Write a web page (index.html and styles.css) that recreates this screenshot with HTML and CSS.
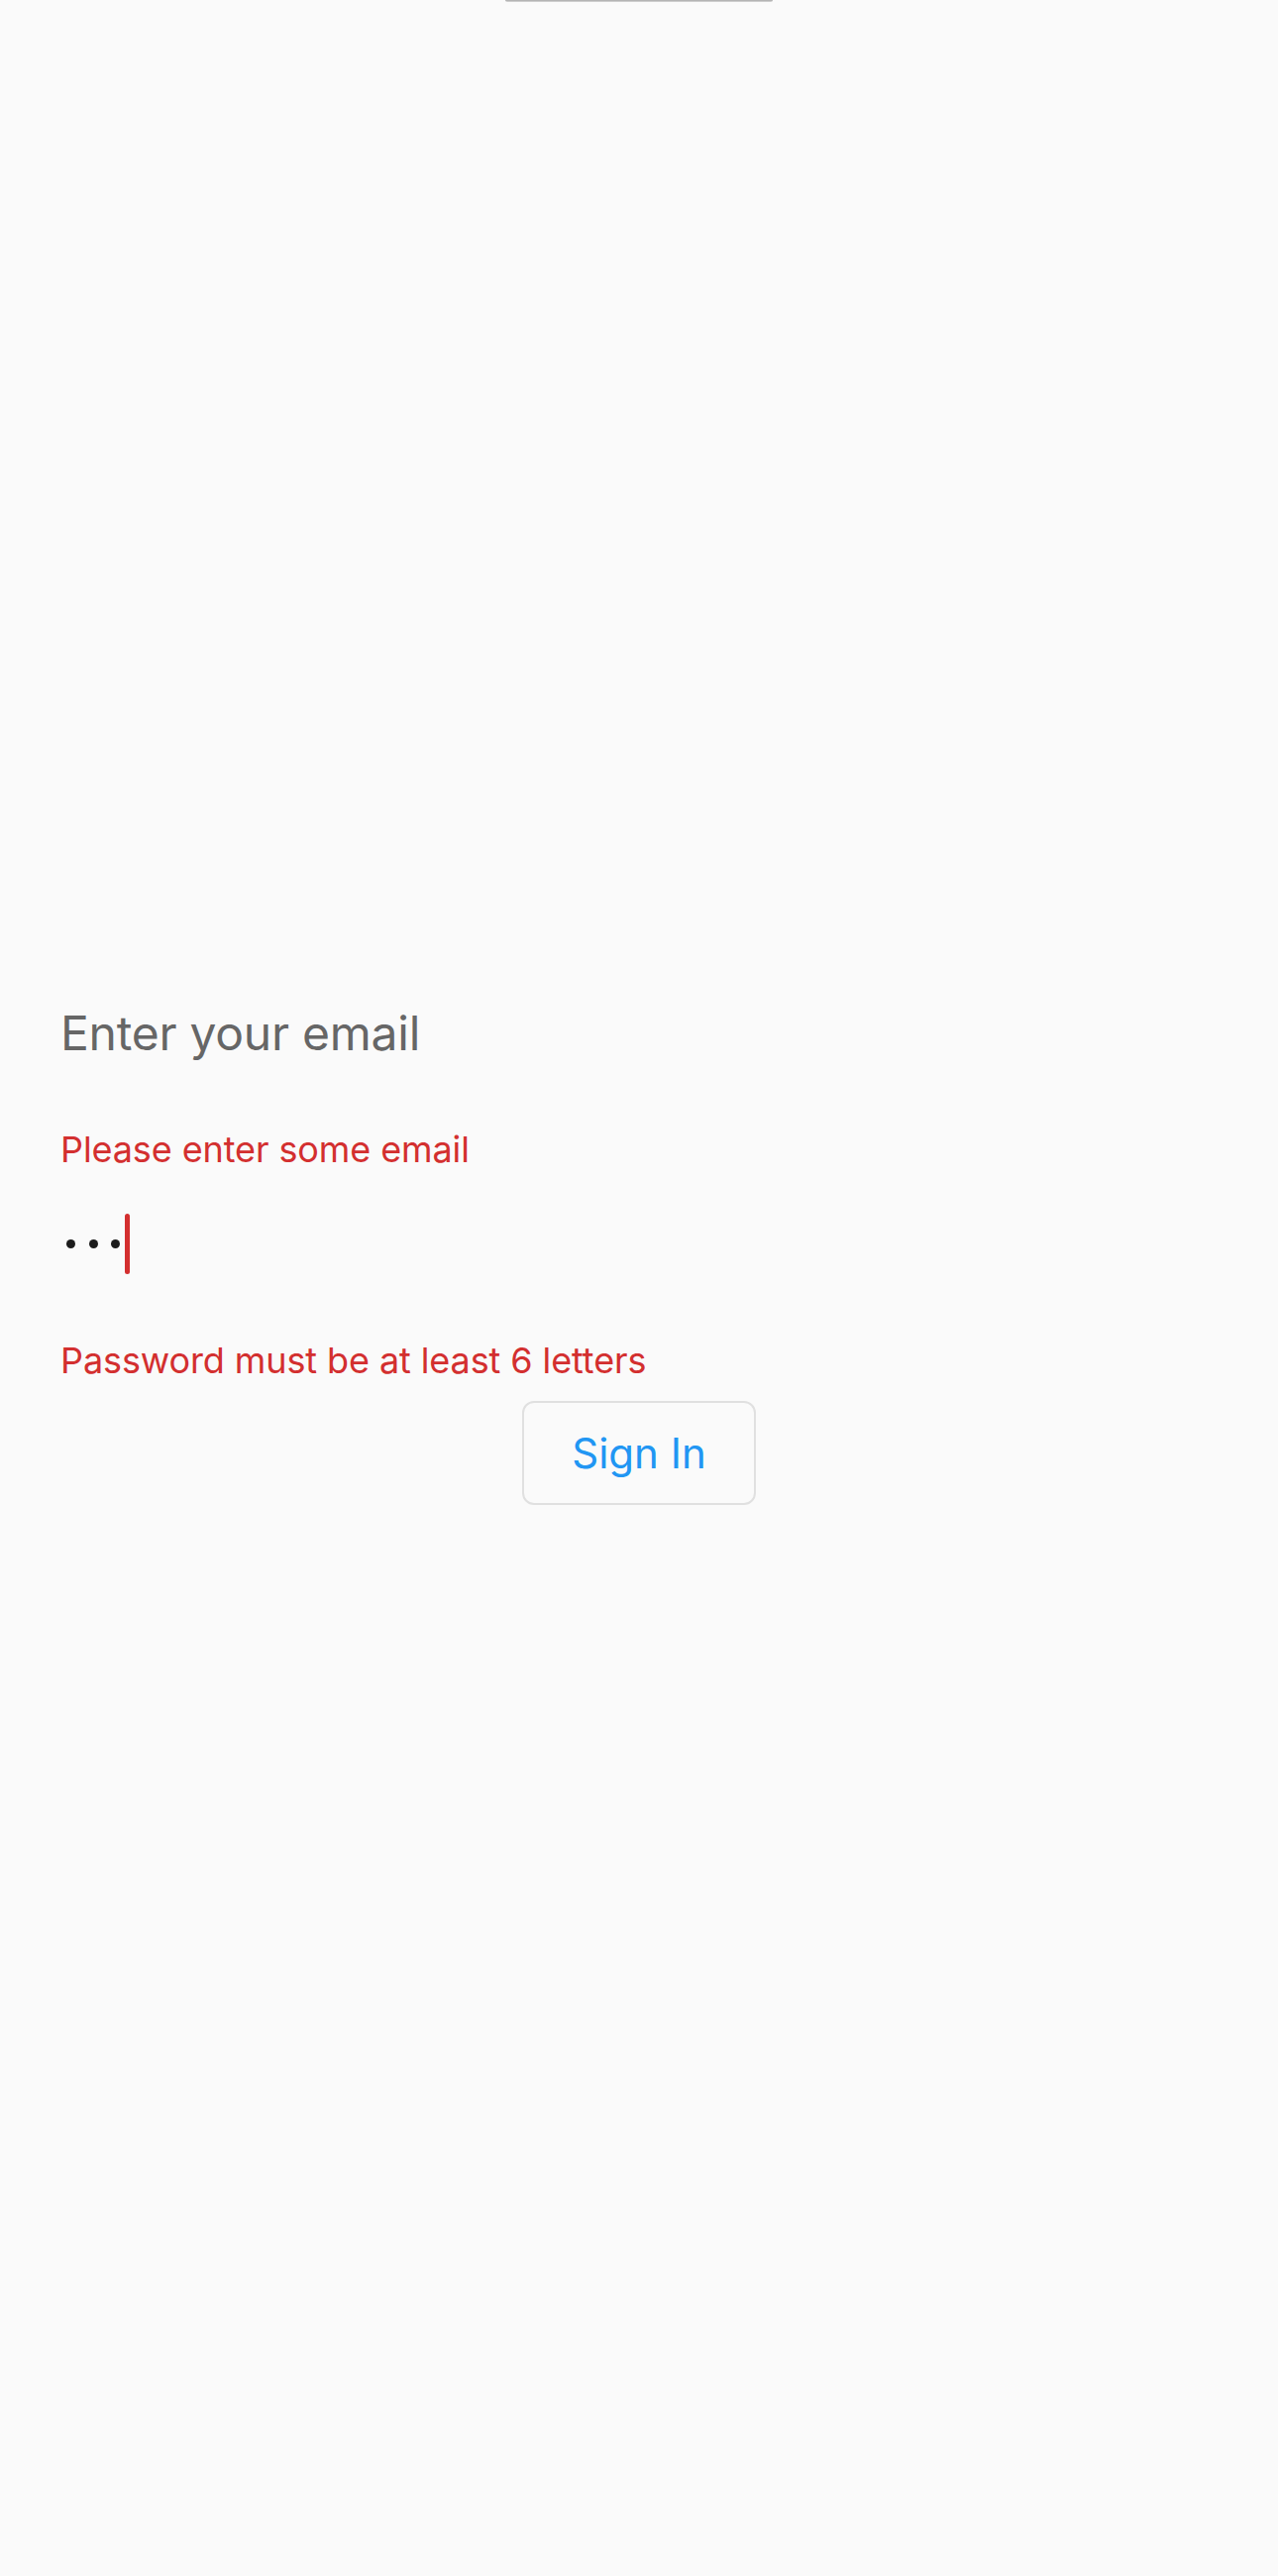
FILE: index.html
```html
<!DOCTYPE html>
<html lang="en">
<head>
<meta charset="utf-8">
<title>Sign In</title>
<link rel="stylesheet" href="styles.css">
</head>
<body>
<div class="screen">
  <div class="sheet-edge"></div>
  <form class="form">
    <div class="field email">Enter your email</div>
    <div class="error err-email">Please enter some email</div>
    <div class="field password">
      <span class="dot"></span><span class="dot"></span><span class="dot"></span><span class="cursor"></span>
    </div>
    <div class="error err-password">Password must be at least 6 letters</div>
    <div class="actions">
      <button type="button" class="btn">Sign In</button>
    </div>
  </form>
</div>
</body>
</html>
```
FILE: styles.css
```css
html, body {
  margin: 0;
  padding: 0;
  background: #fafafa;
}
body {
  font-family: Inter, "Noto Sans", Roboto, sans-serif;
}
.screen {
  width: 1290px;
  height: 2600px;
  background: #fafafa;
  overflow: hidden;
}
.sheet-edge {
  width: 270px;
  height: 2px;
  margin-left: 510px;
  background: linear-gradient(to bottom, #a8a8a8, #d8d8d8);
  border-radius: 0 0 4px 4px;
}
.form {
  display: flex;
  flex-direction: column;
  padding: 0 62px 0 61px;
  margin-top: 1011px;
}
.field.email {
  font-size: 48px;
  line-height: 60px;
  height: 60px;
  color: #666666;
  letter-spacing: -0.25px;
}
.error {
  font-size: 36px;
  line-height: 44px;
  height: 44px;
  color: #d32f2f;
  letter-spacing: -0.1px;
}
.err-email {
  margin-top: 65px;
}
.field.password {
  display: flex;
  align-items: center;
  height: 61px;
  margin-top: 43px;
  padding-left: 6px;
}
.dot {
  width: 9px;
  height: 9px;
  border-radius: 50%;
  background: #1c1c1c;
  margin-right: 13.5px;
}
.dot:nth-child(3) {
  margin-right: 5px;
}
.cursor {
  width: 5px;
  height: 61px;
  border-radius: 3px;
  background: #d32f2f;
}
.err-password {
  margin-top: 65px;
}
.actions {
  display: flex;
  justify-content: center;
  margin-top: 19px;
  margin-left: -61px;
  margin-right: -62px;
}
.btn {
  width: 236px;
  height: 105px;
  border: 2px solid #e0e0e0;
  border-radius: 12px;
  background: transparent;
  color: #2196f3;
  font-family: Inter, "Noto Sans", Roboto, sans-serif;
  font-size: 42px;
  padding: 0;
}
```
